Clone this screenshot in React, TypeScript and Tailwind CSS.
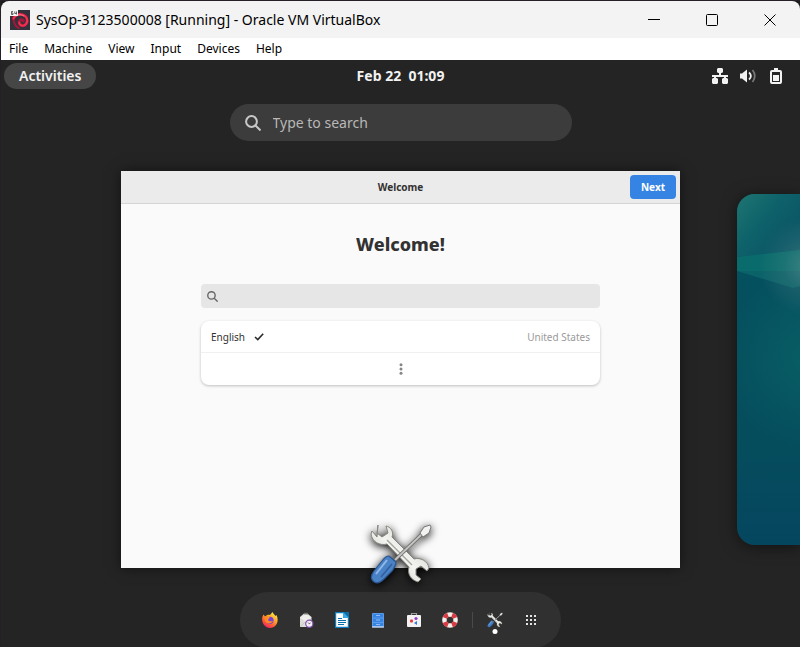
import React from "react";

const cantarell = "font-['Noto_Sans','Open_Sans',sans-serif]";

function DebianIcon() {
  return (
    <svg viewBox="0 0 20 20" className="size-5 shrink-0" aria-hidden="true">
      <rect width="20" height="20" fill="#33323c" />
      <g fill="none" strokeLinecap="round">
        <path d="M3.500 8c0 4 2 8.500 5 10" stroke="#a3183a" strokeWidth="2.200" />
        <path d="M3.500 9C4.500 5 9 3.600 12.500 4.600c4.500 1.200 6 6.400 3.500 9.400-2.300 2.800-6.500 1.800-6.800-1.500-.2-2.500 2.800-3.700 4-1.700" stroke="#a3183a" strokeWidth="3" />
        <path d="M3.500 8.500C5 5 9 3.600 12.500 4.600c4.500 1.200 6 6.400 3.500 9.400-2.300 2.800-6.500 1.800-6.800-1.500" stroke="#f0304f" strokeWidth="2" />
        <path d="M6 5.800c2-1.300 6-1.500 8 .2" stroke="#ff8795" strokeWidth=".9" />
      </g>
      <rect width="8" height="6" fill="#f4f4f4" />
      <path d="M1.500 1.500h1.500M1.500 1.500v3h1.500v-1.500h-1.500M4.800 1.500v2h1.700M6.500 1.500v3" fill="none" stroke="#555" strokeWidth=".9" />
    </svg>
  );
}

function SearchIcon({ className }: { className: string }) {
  return (
    <svg viewBox="0 0 16 16" className={className} fill="none" stroke="currentColor" strokeWidth="2" aria-hidden="true">
      <circle cx="6.500" cy="6.500" r="5.400" />
      <path d="M10.500 10.500l5 5" />
    </svg>
  );
}

function Tools({ className }: { className: string }) {
  return (
    <svg viewBox="0 0 64 64" className={className} aria-hidden="true">
      <defs>
        <linearGradient id="steel" x1="0" y1="1" x2="1" y2="0">
          <stop offset="0" stopColor="#b4b4b0" />
          <stop offset=".5" stopColor="#f4f4f1" />
          <stop offset="1" stopColor="#c0c0bc" />
        </linearGradient>
      </defs>
      <path
        d="M9 3l-1 8 5 4 6-4-2-7c5 1 8 6 6 11l22 22c6-2 14 2 15 9l-2 3-6-5-5 3 0 6 5 4-3 3c-7-2-11-8-9-15L18 22C11 24 3 20 2 12l1-3 5 6z"
        fill="url(#steel)"
        stroke="#85857f"
        strokeWidth="1"
        strokeLinejoin="round"
      />
      <path d="M18 18l25 25" stroke="#a5a5a0" strokeWidth="1.500" />
      <path d="M53 12L26 38" stroke="#666" strokeWidth="3.600" />
      <path d="M53 12L26 38" stroke="#c4c4c1" strokeWidth="2" />
      <path d="M51 11l4-6 6-2 1 2-2 6-6 4z" fill="#f2f2f0" stroke="#777" />
      <path d="M20 34l7 6c0 4-2 6-4 9l-8 8c-4 4-8 5-11 2s-2-6 1-10l8-10c2-3 4-5 7-5z" fill="#4a82c6" stroke="#2a5590" strokeWidth="1.200" />
      <path d="M18 38L7 52" stroke="#8fb8e8" strokeWidth="2" />
      <path d="M23 42L12 55" stroke="#315f9c" strokeWidth="1.500" />
    </svg>
  );
}

function Wallpaper() {
  return (
    <svg viewBox="0 0 63 351" preserveAspectRatio="none" className="size-full" aria-hidden="true">
      <defs>
        <linearGradient id="lower" x1="0" y1="0" x2="0" y2="1">
          <stop offset="0" stopColor="#065763" />
          <stop offset=".25" stopColor="#05505f" />
          <stop offset=".7" stopColor="#054d5d" />
          <stop offset="1" stopColor="#05465f" />
        </linearGradient>
        <linearGradient id="upper" gradientUnits="userSpaceOnUse" x1="0" y1="0" x2="50" y2="40">
          <stop offset="0" stopColor="#1f7672" />
          <stop offset=".55" stopColor="#0e626a" />
          <stop offset="1" stopColor="#0b5766" />
        </linearGradient>
        <radialGradient id="glow" gradientUnits="userSpaceOnUse" cx="72" cy="72" r="50">
          <stop offset="0" stopColor="#80a0a0" stopOpacity=".45" />
          <stop offset=".5" stopColor="#80a0a0" stopOpacity=".15" />
          <stop offset="1" stopColor="#80a0a0" stopOpacity="0" />
        </radialGradient>
        <radialGradient id="teal" gradientUnits="userSpaceOnUse" cx="75" cy="165" r="90">
          <stop offset="0" stopColor="#0a6868" stopOpacity=".6" />
          <stop offset="1" stopColor="#0a6868" stopOpacity="0" />
        </radialGradient>
      </defs>
      <rect width="63" height="351" fill="url(#lower)" />
      <rect width="63" height="351" fill="url(#teal)" />
      <path d="M0 0h63v56L0 63z" fill="url(#upper)" />
      <path d="M0 63l63-7v36l-7 2L0 77z" fill="#0c6269" />
      <path d="M0 63l63-7v21H0z" fill="#0a6b6c" />
      <rect width="63" height="130" fill="url(#glow)" />
    </svg>
  );
}

const menus = ["File", "Machine", "View", "Input", "Devices", "Help"];

function HostFrame() {
  return (
    <>
      <header className="flex h-[37px] shrink-0 items-center rounded-t-lg bg-[#f3f3f3] pl-[9px] pr-px text-black">
        <DebianIcon />
        <h1 className="ml-[6px] flex-1 whitespace-nowrap text-[14px] leading-5">SysOp-3123500008 [Running] - Oracle VM VirtualBox</h1>
        <button aria-label="Minimize" className="flex h-full w-[58px] items-center justify-center">
          <svg viewBox="0 0 12 12" className="size-3" stroke="#000" fill="none"><path d="M0 5.500h12" /></svg>
        </button>
        <button aria-label="Maximize" className="flex h-full w-[58px] items-center justify-center">
          <svg viewBox="0 0 12 12" className="size-3" stroke="#000" fill="none"><rect x=".5" y=".5" width="11" height="11" rx="1" /></svg>
        </button>
        <button aria-label="Close" className="flex h-full w-[58px] items-center justify-center">
          <svg viewBox="0 0 12 12" className="size-3" stroke="#000" fill="none"><path d="M.5.5l11 11M11.500.5l-11 11" /></svg>
        </button>
      </header>
      <nav aria-label="Machine menu" className="flex h-[22px] shrink-0 items-center gap-4 bg-white pl-2 text-[12px] leading-4 text-black">
        {menus.map((m) => (
          <button key={m}>{m}</button>
        ))}
      </nav>
    </>
  );
}

function TopBar() {
  return (
    <div className="grid h-8 shrink-0 grid-cols-3 items-center px-[3px] text-[14px] font-semibold leading-5 text-[#f2f2f2]">
      <button className="h-[26px] justify-self-start rounded-full bg-[#464646] px-[15px]">Activities</button>
      <button className="justify-self-center whitespace-pre font-bold">{"Feb 22  01:09"}</button>
      <button aria-label="System status" className="flex items-center gap-3 justify-self-end pr-[13px]">
        <svg viewBox="0 0 16 16" className="size-4" fill="#f2f2f2">
          <path d="M6 0h4l1 1v3l-1 1H9v2h7v2h-2v1h1l1 1v4l-1 1h-4l-1-1v-4l1-1h1V9H4v1h1l1 1v4l-1 1H1l-1-1v-4l1-1h1V9H0V7h7V5H6L5 4V1z" />
        </svg>
        <svg viewBox="0 0 16 16" className="size-4" fill="none" strokeWidth="1.800">
          <path d="M0 5.500h2l5-4v13l-5-4H0z" fill="#f2f2f2" />
          <path d="M9 4.500c2.500 2 2.500 5 0 7" stroke="#f2f2f2" />
          <path d="M12.500 2c3 3.500 3 8.500 0 12" stroke="#777" />
        </svg>
        <svg viewBox="0 0 16 16" className="size-4" fill="none">
          <path d="M4 3h8a1 1 0 011 1v10a1 1 0 01-1 1H4a1 1 0 01-1-1V4a1 1 0 011-1z" stroke="#f2f2f2" strokeWidth="2" />
          <path d="M6 0h4v2H6zM5 7h6v6H5z" fill="#f2f2f2" />
        </svg>
      </button>
    </div>
  );
}

function WelcomeWindow() {
  return (
    <section aria-label="Welcome" className="relative flex h-[397px] flex-col bg-[#fafafa] text-[#323232] shadow-[0_0_12px_rgba(0,0,0,0.5)]">
      <div className="grid h-[33px] grid-cols-[1fr_auto_1fr] items-center border-b border-[#d5d5d5] bg-[#ebebeb] px-1">
        <span />
        <span className="text-[10px] font-bold leading-4">Welcome</span>
        <button className="h-6 w-[46px] justify-self-end rounded bg-[#3584e4] text-[10px] font-bold leading-4 text-white">Next</button>
      </div>
      <div className="mx-auto w-[399px] pt-[26px]">
        <h2 className="text-center text-[18px] font-extrabold leading-7">Welcome!</h2>
        <label className="mt-[26px] flex h-6 items-center rounded bg-[#e6e6e6] pl-[6px] text-[#666]">
          <SearchIcon className="size-[11px]" />
          <input aria-label="Search languages" className="ml-2 min-w-0 flex-1 bg-transparent text-[10px] outline-none" />
        </label>
        <ul className="mt-[13px] rounded-lg bg-white text-[10px] leading-4 shadow-[0_1px_3px_rgba(0,0,0,0.24)]">
          <li>
            <button className="flex h-8 w-full items-center border-b border-[#f0f0f0] px-[10px]">
              <span>English</span>
              <svg viewBox="0 0 10 8" className="ml-[9px] h-2 w-[10px]" fill="none" stroke="#2b2b2b" strokeWidth="1.600"><path d="M1 4l2.800 2.600L9.200.8" /></svg>
              <span className="ml-auto text-[#9a9a9a]">United States</span>
            </button>
          </li>
          <li>
            <button aria-label="More languages" className="flex h-8 w-full items-center justify-center">
              <svg viewBox="0 0 4 12" className="h-3 w-1" fill="#858585"><circle cx="2" cy="1.800" r="1.500" /><circle cx="2" cy="6" r="1.500" /><circle cx="2" cy="10.200" r="1.500" /></svg>
            </button>
          </li>
        </ul>
      </div>
      <Tools className="absolute -bottom-[18px] left-1/2 size-16 -translate-x-1/2 drop-shadow-[0_2px_4px_rgba(0,0,0,1)]" />
    </section>
  );
}

function Firefox() {
  return (
    <svg viewBox="0 0 16 16" className="size-4">
      <defs>
        <linearGradient id="fox" x1=".8" y1="0" x2=".2" y2="1">
          <stop offset="0" stopColor="#fff34a" /><stop offset=".4" stopColor="#ffa12a" /><stop offset=".75" stopColor="#ff4b3c" /><stop offset="1" stopColor="#e2198c" />
        </linearGradient>
      </defs>
      <path d="M1.500 2.500L3 4.500C5 2.500 7 2.500 8 3L10.500 0c.5 1.500 2 2.500 3 4l1-1c3 6 0 13-6.500 13S-2 8 1.500 2.500z" fill="url(#fox)" />
      <circle cx="8" cy="8.300" r="3.600" fill="#7541d8" />
      <path d="M2.500 5c2-1.500 4-.8 5.500.8L6 7.500c.5 2 3 2.500 5 1-1 3.500-6 4-8 .5z" fill="#ff8b1f" />
    </svg>
  );
}

function Evolution() {
  return (
    <svg viewBox="0 0 16 16" className="size-4">
      <path d="M2 5L6 1.500h3.500l4 3.500v10H2z" fill="#dedcd8" />
      <path d="M6 .8h4v1.700H6z" fill="#77756f" />
      <path d="M2 5.500l5.500 4.500 6-4.500L9 2.800H6.500z" fill="#f0efec" />
      <path d="M2 15l5-5" stroke="#c4c1bb" strokeWidth=".8" />
      <circle cx="11.300" cy="11.700" r="3.600" fill="#f4effa" stroke="#8050a5" strokeWidth="1.200" />
      <path d="M10 10.500l1.300 1.300L12.500 11" stroke="#333" fill="none" strokeWidth=".8" />
    </svg>
  );
}

function Writer() {
  return (
    <svg viewBox="0 0 16 16" className="size-4">
      <path d="M1.600.6h7.900l4.900 5v9.800H1.600z" fill="#fff" stroke="#0b7dbf" strokeWidth="1.200" />
      <path d="M9 0h6v6z" fill="#0b6ca8" />
      <path d="M9 0v6h6z" fill="#35a9e1" />
      <path d="M4 6.500h4M4 8.500h8M4 10.500h8M4 12.500h6" stroke="#0b6ca8" />
    </svg>
  );
}

function Files() {
  return (
    <svg viewBox="0 0 16 16" className="size-4">
      <rect x="2" y="1" width="12" height="14.500" rx="1" fill="#5e9be8" />
      <path d="M3 2h10v3.500H3zM3 6.500h10V10H3zM3 11h10v3H3z" fill="#3584e4" />
      <path d="M6 3.500h4M6 8h4M6 12.500h4" stroke="#93bbef" />
      <path d="M2 15h12" stroke="#e8edf4" />
    </svg>
  );
}

function Software() {
  return (
    <svg viewBox="0 0 16 16" className="size-4">
      <path d="M5.500 4V1.500h5V4" fill="none" stroke="#9b9b98" strokeWidth="1.200" />
      <rect x="1" y="3" width="14" height="12" rx="1" fill="#f3f2f0" />
      <rect x="4" y="7.500" width="3" height="3" rx="1" fill="#e8393f" />
      <circle cx="10" cy="6.500" r="1.600" fill="#9240c8" />
      <path d="M8 11l3-2v4z" fill="#2e78e5" />
    </svg>
  );
}

function Help() {
  return (
    <svg viewBox="0 0 16 16" className="size-4" fill="none" strokeWidth="4.500">
      <circle cx="8" cy="8" r="5.600" stroke="#f5f2ee" />
      <circle cx="8" cy="8" r="5.600" stroke="#d83b43" pathLength="80" strokeDasharray="10 10" strokeDashoffset="-5" />
    </svg>
  );
}

function Dock() {
  const apps = [
    { name: "Firefox", icon: <Firefox /> },
    { name: "Evolution", icon: <Evolution /> },
    { name: "LibreOffice Writer", icon: <Writer /> },
    { name: "Files", icon: <Files /> },
    { name: "Software", icon: <Software /> },
    { name: "Help", icon: <Help /> },
  ];
  return (
    <nav aria-label="Dash" className="mx-auto mt-6 flex h-14 w-[321px] shrink-0 items-center gap-5 rounded-[28px] bg-[#303030] px-[22px]">
      {apps.map((a) => (
        <button key={a.name} aria-label={a.name}>{a.icon}</button>
      ))}
      <div className="-mx-[6px] h-4 w-px bg-[#4a4a4a]" />
      <button aria-label="Initial Setup" className="relative">
        <Tools className="size-4" />
        <span className="absolute -bottom-[6px] left-1/2 size-[5px] -translate-x-1/2 rounded-full bg-white" />
      </button>
      <button aria-label="Show Applications">
        <svg viewBox="0 0 16 16" className="size-4" fill="#e4e4e4">
          {[3, 7, 11].map((y) => [3, 7, 11].map((x) => <rect key={`${x}-${y}`} x={x} y={y} width="2" height="2" />))}
        </svg>
      </button>
    </nav>
  );
}

export default function App() {
  return (
    <div className={`flex h-screen flex-col overflow-hidden border-l border-t border-[#262026] bg-[#1a1a1a] ${cantarell}`}>
      <HostFrame />
      <main className="flex min-h-0 flex-1 flex-col overflow-hidden bg-[#242424]">
        <TopBar />
        <label className="mx-auto mt-3 flex h-[37px] w-[342px] shrink-0 items-center gap-3 rounded-full bg-[#3c3c3c] px-[15px] text-[#c8c8c8]">
          <SearchIcon className="size-4" />
          <input aria-label="Search" placeholder="Type to search" className="min-w-0 flex-1 bg-transparent text-[14px] leading-5 outline-none placeholder:text-[#b8b8b8]" />
        </label>
        <div className="mt-[30px] grid shrink-0 grid-cols-[1fr_559px_1fr]">
          <div />
          <WelcomeWindow />
          <div className="ml-[57px] mt-[23px] h-[351px] overflow-hidden rounded-l-[18px] shadow-[0_2px_16px_rgba(0,0,0,0.5)]">
            <Wallpaper />
          </div>
        </div>
        <Dock />
      </main>
    </div>
  );
}
